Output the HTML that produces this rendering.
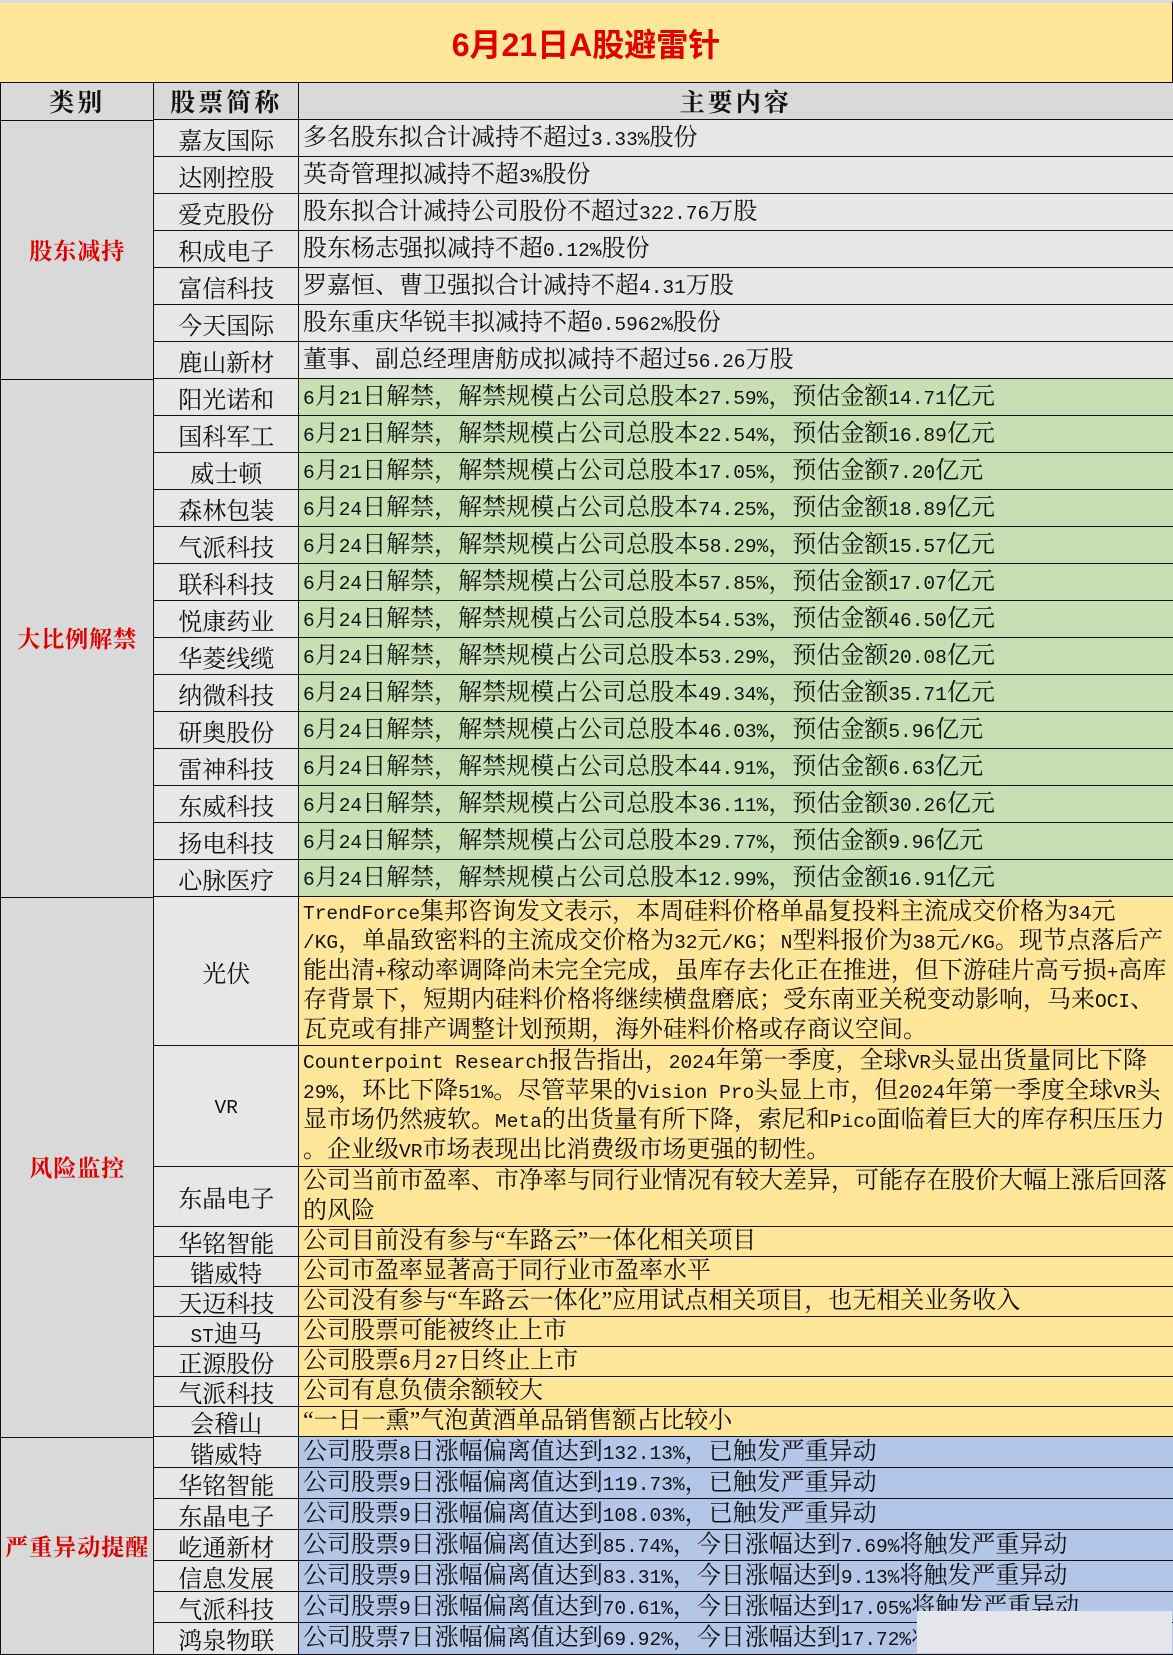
<!DOCTYPE html>
<html><head><meta charset="utf-8"><style>
*{margin:0;padding:0;box-sizing:border-box}
body{width:1173px;height:1654px;background:#fff;overflow:hidden;position:relative;font-family:"Liberation Serif","Noto Serif CJK SC",serif;color:#111}
.cell{position:absolute;border:1.5px solid #111;display:flex;align-items:center;white-space:nowrap;overflow:hidden;font-size:24px}
.cell>div{width:100%}
.ln{height:29.5px;line-height:29.5px;overflow:visible}
.t{background:#FFE699;color:#E00000;font-weight:bold;font-size:32px;justify-content:center;border:none;border-top:3px solid #ddd;border-bottom:1.5px solid #111;border-right:1.5px solid #111;font-family:"Liberation Sans","Noto Sans CJK SC",sans-serif}
.t>div,.h>div,.c>div,.n>div{width:auto}
.h{background:#D9D9D9;font-weight:bold;justify-content:center;font-size:25px;letter-spacing:3px}
.c{background:#D9D9D9;color:#E00000;font-weight:bold;justify-content:center;font-size:23px;letter-spacing:1px}
.n{background:#E7E7E7;justify-content:center;font-size:24px}
.g1,.g2,.g3,.g4{padding-left:4px}
.g1{background:#E7E7E7}.g2{background:#C6E0B4}.g3{background:#FFE699}.g4{background:#B4C6E7}
.a{font-family:"Liberation Mono",monospace;font-size:19.5px;letter-spacing:0;line-height:1}
.blur{position:absolute;left:917px;top:1611px;width:255px;height:42px;background:#E4E6EC}
</style></head><body>
<div class="cell t" style="left:0;top:0;width:1173px;height:83px"><div>6月21日A股避雷针</div></div>
<script>
var X=[0,153,298,1172];
var body=document.body;
function cell(cls,x0,x1,y0,y1,html){
  var d=document.createElement('div');d.className='cell '+cls;
  d.style.left=x0+'px';d.style.top=y0+'px';d.style.width=(x1-x0+1.5)+'px';d.style.height=(y1-y0+1.5)+'px';
  d.innerHTML='<div>'+html+'</div>';body.appendChild(d);return d;
}
cell('h',X[0],X[1],82,119,'类别');cell('h',X[1],X[2],82,119,'股票简称');cell('h',X[2],X[3],82,119,'主要内容');
var sections=[
 ['股东减持','g1',[
 ['嘉友国际','多名股东拟合计减持不超过3.33%股份',37],
 ['达刚控股','英奇管理拟减持不超3%股份',37],
 ['爱克股份','股东拟合计减持公司股份不超过322.76万股',37],
 ['积成电子','股东杨志强拟减持不超0.12%股份',37],
 ['富信科技','罗嘉恒、曹卫强拟合计减持不超4.31万股',37],
 ['今天国际','股东重庆华锐丰拟减持不超0.5962%股份',37],
 ['鹿山新材','董事、副总经理唐舫成拟减持不超过56.26万股',37]]],
 ['大比例解禁','g2',[
 ['阳光诺和','6月21日解禁，解禁规模占公司总股本27.59%，预估金额14.71亿元',37],
 ['国科军工','6月21日解禁，解禁规模占公司总股本22.54%，预估金额16.89亿元',37],
 ['威士顿','6月21日解禁，解禁规模占公司总股本17.05%，预估金额7.20亿元',37],
 ['森林包装','6月24日解禁，解禁规模占公司总股本74.25%，预估金额18.89亿元',37],
 ['气派科技','6月24日解禁，解禁规模占公司总股本58.29%，预估金额15.57亿元',37],
 ['联科科技','6月24日解禁，解禁规模占公司总股本57.85%，预估金额17.07亿元',37],
 ['悦康药业','6月24日解禁，解禁规模占公司总股本54.53%，预估金额46.50亿元',37],
 ['华菱线缆','6月24日解禁，解禁规模占公司总股本53.29%，预估金额20.08亿元',37],
 ['纳微科技','6月24日解禁，解禁规模占公司总股本49.34%，预估金额35.71亿元',37],
 ['研奥股份','6月24日解禁，解禁规模占公司总股本46.03%，预估金额5.96亿元',37],
 ['雷神科技','6月24日解禁，解禁规模占公司总股本44.91%，预估金额6.63亿元',37],
 ['东威科技','6月24日解禁，解禁规模占公司总股本36.11%，预估金额30.26亿元',37],
 ['扬电科技','6月24日解禁，解禁规模占公司总股本29.77%，预估金额9.96亿元',37],
 ['心脉医疗','6月24日解禁，解禁规模占公司总股本12.99%，预估金额16.91亿元',37]]],
 ['风险监控','g3',[
 ['光伏','TrendForce集邦咨询发文表示，本周硅料价格单晶复投料主流成交价格为34元<br>/KG，单晶致密料的主流成交价格为32元/KG；N型料报价为38元/KG。现节点落后产<br>能出清+稼动率调降尚未完全完成，虽库存去化正在推进，但下游硅片高亏损+高库<br>存背景下，短期内硅料价格将继续横盘磨底；受东南亚关税变动影响，马来OCI、<br>瓦克或有排产调整计划预期，海外硅料价格或存商议空间。',149],
 ['VR','Counterpoint Research报告指出，2024年第一季度，全球VR头显出货量同比下降<br>29%，环比下降51%。尽管苹果的Vision Pro头显上市，但2024年第一季度全球VR头<br>显市场仍然疲软。Meta的出货量有所下降，索尼和Pico面临着巨大的库存积压压力<br>。企业级VR市场表现出比消费级市场更强的韧性。',121],
 ['东晶电子','公司当前市盈率、市净率与同行业情况有较大差异，可能存在股价大幅上涨后回落<br>的风险',60],
 ['华铭智能','公司目前没有参与“车路云”一体化相关项目',30],
 ['锴威特','公司市盈率显著高于同行业市盈率水平',30],
 ['天迈科技','公司没有参与“车路云一体化”应用试点相关项目，也无相关业务收入',30],
 ['ST迪马','公司股票可能被终止上市',30],
 ['正源股份','公司股票6月27日终止上市',30],
 ['气派科技','公司有息负债余额较大',30],
 ['会稽山','“一日一熏”气泡黄酒单品销售额占比较小',30]]],
 ['严重异动提醒','g4',[
 ['锴威特','公司股票8日涨幅偏离值达到132.13%，已触发严重异动',31],
 ['华铭智能','公司股票9日涨幅偏离值达到119.73%，已触发严重异动',31],
 ['东晶电子','公司股票9日涨幅偏离值达到108.03%，已触发严重异动',31],
 ['屹通新材','公司股票9日涨幅偏离值达到85.74%，今日涨幅达到7.69%将触发严重异动',31],
 ['信息发展','公司股票9日涨幅偏离值达到83.31%，今日涨幅达到9.13%将触发严重异动',31],
 ['气派科技','公司股票9日涨幅偏离值达到70.61%，今日涨幅达到17.05%将触发严重异动',31],
 ['鸿泉物联','公司股票7日涨幅偏离值达到69.92%，今日涨幅达到17.72%将触发严重异动',31]]]
];
function wa(p){return p.replace(/([\x20-\x7E]+)/g,'<span class="a">$1</span>');}
function lines(s){return s.split('<br>').map(function(p){return '<div class="ln">'+wa(p)+'</div>';}).join('');}
var y=119;
sections.forEach(function(s){
  var y0=y;
  s[2].forEach(function(r){
    cell('n',X[1],X[2],y,y+r[2],wa(r[0]));
    cell(s[1],X[2],X[3],y,y+r[2],lines(r[1]));
    y+=r[2];
  });
  if(y>1653)y=1653;
  var c=cell('c',X[0],X[1],y0,y,s[0]);
  body.insertBefore(c,body.firstChild.nextSibling);
});
var b=document.createElement('div');b.className='blur';body.appendChild(b);
</script>
</body></html>
